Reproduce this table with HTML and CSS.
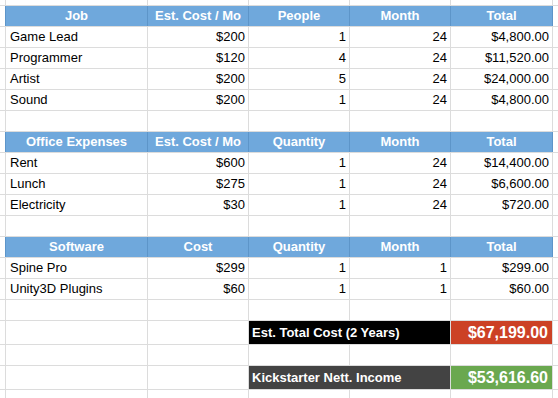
FILE: index.html
```html
<!DOCTYPE html>
<html>
<head>
<meta charset="utf-8">
<link rel="stylesheet" href="styles.css">
</head>
<body>
<div class="sheet">
  <div class="row top"><div></div><div></div><div></div><div></div><div></div><div></div><div></div></div>

  <div class="row head"><div class="e"></div><div>Job</div><div>Est. Cost / Mo</div><div>People</div><div>Month</div><div>Total</div><div class="e"></div></div>
  <div class="row"><div></div><div class="l">Game Lead</div><div class="r">$200</div><div class="r">1</div><div class="r">24</div><div class="r">$4,800.00</div><div></div></div>
  <div class="row"><div></div><div class="l">Programmer</div><div class="r">$120</div><div class="r">4</div><div class="r">24</div><div class="r">$11,520.00</div><div></div></div>
  <div class="row"><div></div><div class="l">Artist</div><div class="r">$200</div><div class="r">5</div><div class="r">24</div><div class="r">$24,000.00</div><div></div></div>
  <div class="row"><div></div><div class="l">Sound</div><div class="r">$200</div><div class="r">1</div><div class="r">24</div><div class="r">$4,800.00</div><div></div></div>
  <div class="row"><div></div><div></div><div></div><div></div><div></div><div></div><div></div></div>

  <div class="row head"><div class="e"></div><div>Office Expenses</div><div>Est. Cost / Mo</div><div>Quantity</div><div>Month</div><div>Total</div><div class="e"></div></div>
  <div class="row"><div></div><div class="l">Rent</div><div class="r">$600</div><div class="r">1</div><div class="r">24</div><div class="r">$14,400.00</div><div></div></div>
  <div class="row"><div></div><div class="l">Lunch</div><div class="r">$275</div><div class="r">1</div><div class="r">24</div><div class="r">$6,600.00</div><div></div></div>
  <div class="row"><div></div><div class="l">Electricity</div><div class="r">$30</div><div class="r">1</div><div class="r">24</div><div class="r">$720.00</div><div></div></div>
  <div class="row"><div></div><div></div><div></div><div></div><div></div><div></div><div></div></div>

  <div class="row head"><div class="e"></div><div>Software</div><div>Cost</div><div>Quantity</div><div>Month</div><div>Total</div><div class="e"></div></div>
  <div class="row"><div></div><div class="l">Spine Pro</div><div class="r">$299</div><div class="r">1</div><div class="r">1</div><div class="r">$299.00</div><div></div></div>
  <div class="row"><div></div><div class="l">Unity3D Plugins</div><div class="r">$60</div><div class="r">1</div><div class="r">1</div><div class="r">$60.00</div><div></div></div>
  <div class="row"><div></div><div></div><div></div><div></div><div></div><div></div><div></div></div>

  <div class="row tall"><div></div><div></div><div></div><div class="label black">Est. Total Cost (2 Years)</div><div class="value red">$67,199.00</div><div></div></div>
  <div class="row"><div></div><div></div><div></div><div></div><div></div><div></div><div></div></div>
  <div class="row tall"><div></div><div></div><div></div><div class="label dark">Kickstarter Nett. Income</div><div class="value green">$53,616.60</div><div></div></div>

  <div class="row last"><div></div><div></div><div></div><div></div><div></div><div></div><div></div></div>
</div>
</body>
</html>
```
FILE: styles.css
```css
html, body {
  margin: 0;
  padding: 0;
  background: #fff;
}
.sheet {
  display: flex;
  flex-direction: column;
  gap: 1px;
  height: 398px;
  overflow: hidden;
  background: #dcdcdc;
  font-family: "Liberation Sans", Arial, sans-serif;
  font-size: 13px;
  color: #000;
}
.row {
  display: grid;
  grid-template-columns: 5px 141px 100px 100px 100px 101px 1fr;
  gap: 1px;
  height: 20px;
  flex: none;
}
.row > div {
  background: #fff;
  line-height: 20px;
  white-space: nowrap;
  overflow: hidden;
}
.row.top { height: 5px; }
.row.tall { height: 23px; }
.row.last { flex: 1; }

.row.head { background: #5d95c9; }
.row.head > div {
  background: #6fa8dc;
  color: #fff;
  font-weight: bold;
  text-align: center;
}
.row.head > div.e { background: #fff; }

.l { padding-left: 4px; }
.r { text-align: right; padding-right: 3px; }

.row.tall > div { line-height: 23px; }
.label {
  grid-column: span 2;
  color: #fff;
  font-weight: bold;
  padding-left: 3px;
}
.value {
  color: #fff;
  font-weight: bold;
  font-size: 16px;
  text-align: right;
  padding-right: 4px;
}
.row > .black { background: #000; }
.row > .dark { background: #434343; }
.row > .red { background: #cc4125; }
.row > .green { background: #6aa84f; }
```
